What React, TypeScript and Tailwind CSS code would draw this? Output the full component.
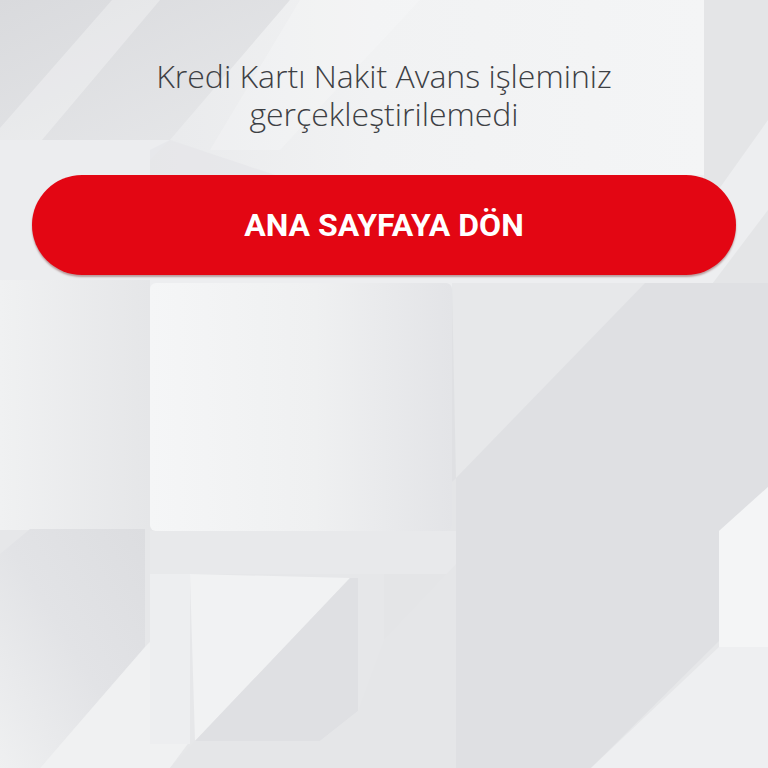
import React from 'react';

const Background: React.FC = () => (
    <svg className="absolute inset-0 h-full w-full" viewBox="0 0 768 768" preserveAspectRatio="none">
        <defs>
            <linearGradient id="tl" x1="0" y1="0" x2="1" y2="1">
                <stop offset="0" stopColor="#d9dadd" />
                <stop offset="1" stopColor="#e7e8ea" />
            </linearGradient>
            <linearGradient id="leftStrip" x1="0" y1="0" x2="1" y2="0">
                <stop offset="0" stopColor="#f0f1f2" />
                <stop offset="1" stopColor="#e5e6e8" />
            </linearGradient>
            <linearGradient id="panel" x1="0" y1="0" x2="1" y2="0">
                <stop offset="0" stopColor="#f5f6f7" />
                <stop offset="0.55" stopColor="#eff0f1" />
                <stop offset="1" stopColor="#e3e4e7" />
            </linearGradient>
            <linearGradient id="block" x1="1" y1="0" x2="0" y2="1">
                <stop offset="0" stopColor="#dcdde0" />
                <stop offset="0.5" stopColor="#e2e3e6" />
                <stop offset="1" stopColor="#eff0f1" />
            </linearGradient>
            <linearGradient id="topPanel" x1="0" y1="0" x2="1" y2="0">
                <stop offset="0" stopColor="#e9eaec" />
                <stop offset="0.4" stopColor="#f1f2f3" />
                <stop offset="1" stopColor="#f4f5f6" />
            </linearGradient>
        </defs>

        <rect x="0" y="0" width="768" height="768" fill="#e6e7e9" />

        {/* top */}
        <polygon points="0,0 290,0 170,140 0,140" fill="url(#tl)" />
        <polygon points="112,0 160,0 42,140 0,140 0,128" fill="#ffffff" opacity="0.3" />
        <polygon points="290,0 704,0 704,175 150,175 150,150 170,140" fill="url(#topPanel)" />
        <polygon points="300,0 420,0 280,150 210,150" fill="#ffffff" opacity="0.2" />
        <polygon points="0,140 170,140 150,160 150,290 0,290" fill="#ecedef" />
        <polygon points="150,150 170,140 275,175 150,175" fill="#e4e5e7" opacity="0.6" />
        <polygon points="704,0 768,0 768,300 704,300" fill="#e4e5e7" />
        <polygon points="768,120 768,210 700,300 640,300" fill="#edeef0" />
        <polygon points="150,175 704,175 704,290 150,290" fill="#edeef0" />

        {/* middle */}
        <rect x="0" y="280" width="150" height="250" fill="url(#leftStrip)" />
        <polygon points="452,283 768,283 768,487 719,531 719,641 591,768 452,768" fill="#dfe0e3" />
        <polygon points="452,283 645,283 456,478" fill="#e7e8ea" />
        <polygon points="384,547 456,478 456,564 384,640" fill="#e4e5e7" />
        <rect x="150" y="283" width="302" height="248" rx="6" fill="url(#panel)" />
        <rect x="150" y="531" width="306" height="43" fill="#e8e9eb" />

        {/* lower right */}
        <polygon points="768,487 719,531 719,647 768,647" fill="#f4f5f6" />
        <polygon points="719,647 768,647 768,768 591,768" fill="#eeeff1" />

        {/* lower left */}
        <polygon points="0,554 30,529 145,529 145,647 40,768 0,768" fill="url(#block)" />
        <polygon points="145,647 190,600 190,741 170,768 40,768" fill="#f0f1f2" />
        <rect x="150" y="574" width="40" height="170" fill="#edeef0" />
        <polygon points="190,574 350,578 195,741" fill="#f1f2f3" />
        <polygon points="350,578 358,578 358,711 320,741 195,741" fill="#dfe0e3" />
        <polygon points="170,768 195,741 320,741 358,711 384,640 456,564 456,768" fill="#e5e6e8" />
    </svg>
);

const App: React.FC = () => {
    return (
        <div className="relative h-screen w-full overflow-hidden bg-[#e6e7e9]">
            <Background />
            <div className="relative flex flex-col items-center px-[32px] pt-[57px]">
                <p className="text-center text-[32px] leading-[38px] font-[350] text-[#3d4044] font-['Open_Sans',sans-serif]">
                    <span className="block">Kredi Kartı Nakit Avans işleminiz</span>
                    <span className="block">gerçekleştirilemedi</span>
                </p>
                <button className="mt-[42px] flex h-[100px] w-full items-center justify-center rounded-full bg-[#e30613] shadow-[0_2px_2px_rgba(90,0,0,0.35)]">
                    <span className="text-[32px] font-bold text-white font-['Roboto',sans-serif]">ANA SAYFAYA DÖN</span>
                </button>
            </div>
        </div>
    );
};

export default App;
